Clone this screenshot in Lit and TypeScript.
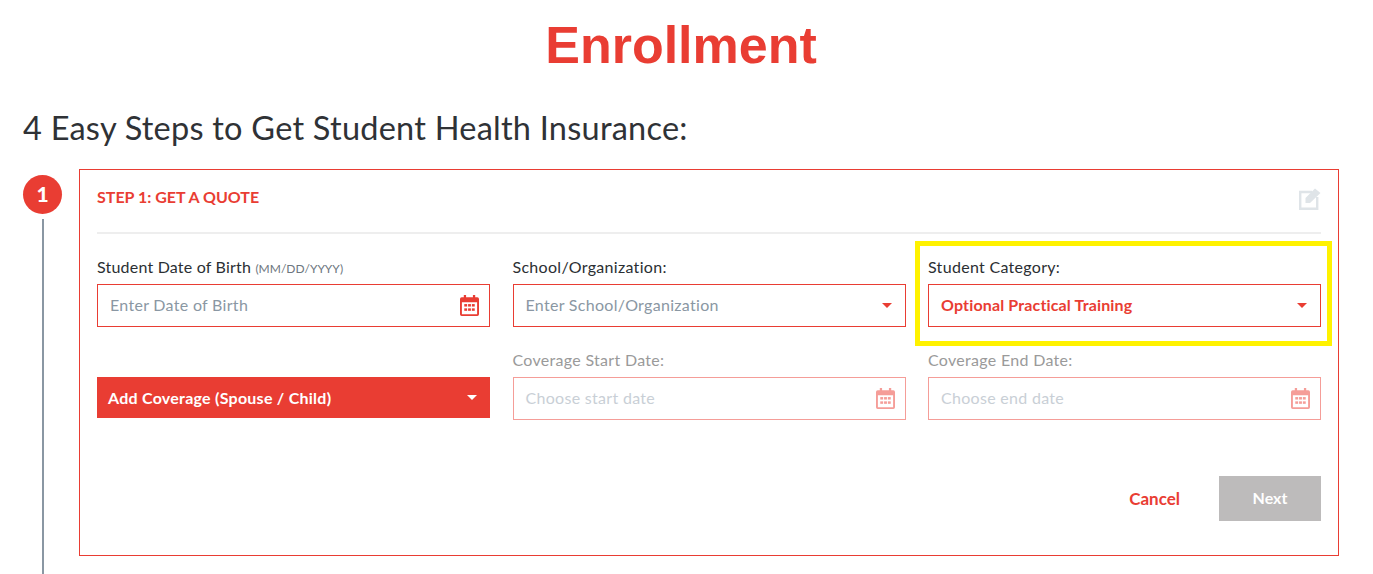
import { LitElement, html, css, svg } from "lit";
import { customElement } from "lit/decorators.js";

const calendar = svg`<svg class="cal" viewBox="0 0 20 22" width="19" height="21" aria-hidden="true">
  <path fill="currentColor" d="M4 0h2.4v2.4h7.2V0H16v2.4h2.2A1.8 1.8 0 0 1 20 4.2v16A1.8 1.8 0 0 1 18.200 22H1.800A1.800 1.800 0 0 1 0 20.200v-16A1.800 1.800 0 0 1 1.800 2.400H4zM2 7.500v12.700h16V7.500z" fill-rule="evenodd"/>
  <g fill="currentColor"><rect x="4.500" y="9.500" width="3" height="2.600"/><rect x="8.500" y="9.500" width="3" height="2.600"/><rect x="12.500" y="9.500" width="3" height="2.600"/><rect x="4.500" y="14" width="3" height="2.600"/><rect x="8.500" y="14" width="3" height="2.600"/><rect x="12.500" y="14" width="3" height="2.600"/></g>
</svg>`;

const caret = html`<span class="caret"></span>`;

@customElement("app-root")
export class AppRoot extends LitElement {
  static styles = css`
    :host { display: block; height: 574px; overflow: hidden; background: #fff; font-family: "Lato", "Open Sans", sans-serif; color: #2b2f33; }
    .page { padding: 0 34px 0 23px; }
    h1 { margin: 0; padding-top: 15px; height: 61px; text-align: center; font: bold 52px/61px "Liberation Sans", Arial, sans-serif; color: #e93d33; }
    h2 { margin: 0; padding-top: 34px; height: 36px; line-height: 36px; font-size: 32.500px; font-weight: 400; color: #2f3236; letter-spacing: .24px; }
    .step { display: flex; gap: 17px; margin-top: 23px; height: 405px; }
    .rail { width: 39px; padding-top: 6px; display: flex; flex-direction: column; align-items: center; gap: 5px; flex: none; }
    .num { width: 39px; height: 39px; border-radius: 50%; background: #e93d33; color: #fff; font-weight: 900; font-size: 21px; display: flex; align-items: center; justify-content: center; flex: none; padding-bottom: 2px; box-sizing: border-box; }
    .line { width: 2px; flex: 1; background: #8a97a3; }
    .card { flex: 1; height: 387px; box-sizing: border-box; border: 1px solid #e93d33; padding: 0 17px; display: flex; flex-direction: column; }
    .head { height: 54px; border-bottom: 2px solid #eeeeee; display: flex; justify-content: space-between; align-items: center; padding-bottom: 8px; box-sizing: content-box; }
    .head h3 { margin: 0 0 2px; font-size: 16px; font-weight: 700; color: #e93d33; }
    .edit { color: #dfe4e8; margin-top: 3px; }
    .grid { display: grid; grid-template-columns: repeat(3, 393px); column-gap: 22.500px; margin-top: 24px; row-gap: 24px; }
    .field { position: relative; display: flex; flex-direction: column; gap: 7px; }
    .field label { font-size: 16px; line-height: 18px; height: 19px; letter-spacing: .3px; color: #2b2f33; white-space: nowrap; }
    .field label.dob { letter-spacing: .2px; }
    .field label small { font-size: 12px; line-height: 1; letter-spacing: 0; color: #6d7680; }
    .field.off label { color: #9a9a9a; }
    .box { height: 43px; box-sizing: border-box; border: 1px solid #e93d33; padding: 0 12px; display: flex; align-items: center; justify-content: space-between; font-size: 16px; letter-spacing: .3px; color: #8a97a3; }
    .box span:first-child { margin-bottom: 2px; }
    .box .cal { color: #e93d33; margin-right: -2px; }
    .off .box { border-color: #f59d98; color: #c9cfd6; }
    .off .box .cal { color: #f59d98; }
    .box.sel { color: #e93d33; font-weight: 700; letter-spacing: .15px; }
    .caret { width: 0; height: 0; border-left: 5.500px solid transparent; border-right: 5.500px solid transparent; border-top: 5.500px solid #e93d33; margin-right: 1px; }
    .mark { position: absolute; left: -13px; right: -11px; top: -17px; bottom: -19px; border: 5px solid #fff200; pointer-events: none; }
    .add { align-self: end; height: 41px; margin-bottom: 2px; box-sizing: border-box; background: #e93d33; color: #fff; font-weight: 700; font-size: 16px; letter-spacing: .25px; display: flex; align-items: center; justify-content: space-between; padding: 0 12px 0 11px; }
    .add .caret { border-top-color: #fff; }
    .actions { display: flex; justify-content: flex-end; align-items: center; margin-top: 56px; gap: 39px; }
    .cancel { color: #e93d33; font-weight: 700; font-size: 17px; margin-bottom: 1px; }
    .next { width: 102px; height: 45px; background: #bdbbbb; color: #fff; font-weight: 700; font-size: 16px; display: flex; align-items: center; justify-content: center; padding-bottom: 2px; box-sizing: border-box; }
  `;

  render() {
    return html`<div class="page">
      <h1>Enrollment</h1>
      <h2>4 Easy Steps to Get Student Health Insurance:</h2>
      <div class="step">
        <div class="rail"><div class="num">1</div><div class="line"></div></div>
        <section class="card">
          <div class="head">
            <h3>STEP 1: GET A QUOTE</h3>
            <svg class="edit" viewBox="0 0 22 23" width="22" height="23" aria-hidden="true">
              <path fill="none" stroke="currentColor" stroke-width="2.400" d="M13 5H1.200v16.800h17V10"/>
              <path fill="currentColor" d="M6.500 11 16 1.500 21.500 6 11 16H6.500z"/>
            </svg>
          </div>
          <div class="grid">
            <div class="field"><label class="dob">Student Date of Birth <small>(MM/DD/YYYY)</small></label><div class="box"><span>Enter Date of Birth</span>${calendar}</div></div>
            <div class="field"><label>School/Organization:</label><div class="box"><span>Enter School/Organization</span>${caret}</div></div>
            <div class="field"><label>Student Category:</label><div class="box sel"><span>Optional Practical Training</span>${caret}</div><div class="mark"></div></div>
            <div class="add"><span>Add Coverage (Spouse / Child)</span>${caret}</div>
            <div class="field off"><label>Coverage Start Date:</label><div class="box"><span>Choose start date</span>${calendar}</div></div>
            <div class="field off"><label>Coverage End Date:</label><div class="box"><span>Choose end date</span>${calendar}</div></div>
          </div>
          <div class="actions"><span class="cancel">Cancel</span><div class="next">Next</div></div>
        </section>
      </div>
    </div>`;
  }
}
